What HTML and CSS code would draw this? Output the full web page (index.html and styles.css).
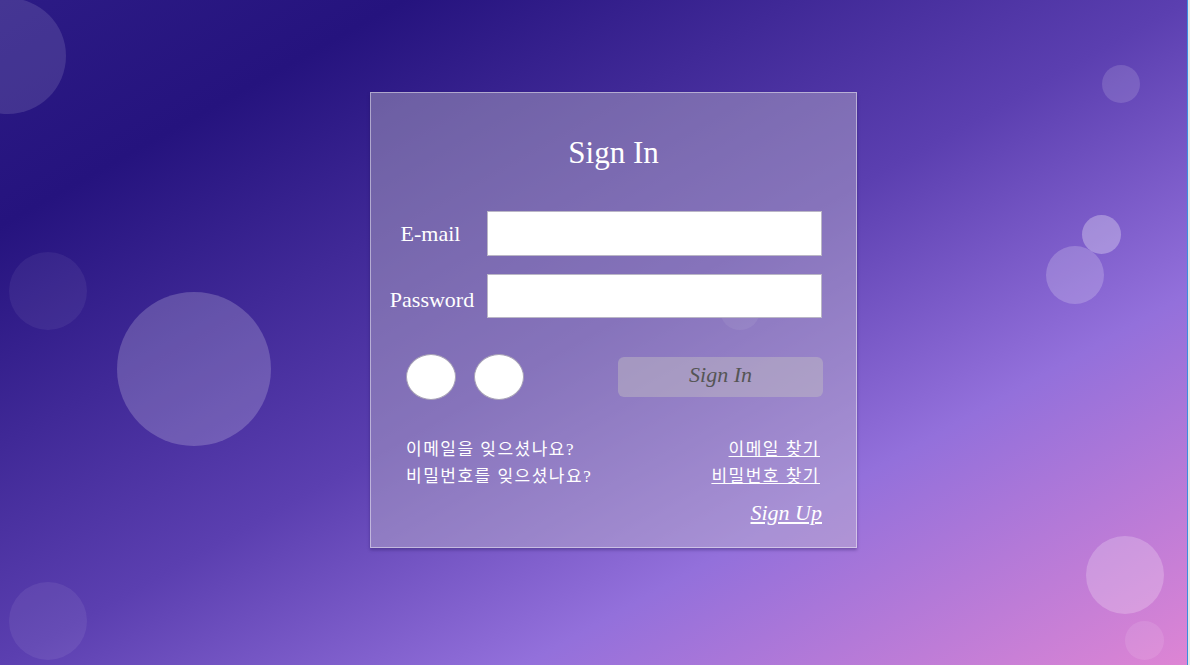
FILE: index.html
```html
<!DOCTYPE html>
<html lang="ko">
<head>
<meta charset="utf-8">
<title>Sign In</title>
<link rel="stylesheet" href="styles.css">
</head>
<body>
<div class="bg">
  <span class="bubble b1"></span>
  <span class="bubble b2"></span>
  <span class="bubble b3"></span>
  <span class="bubble b4"></span>
  <span class="bubble b5"></span>
  <span class="bubble b6"></span>
  <span class="bubble b7"></span>
  <span class="bubble b8"></span>
  <span class="bubble b9"></span>
  <span class="bubble b10"></span>
</div>
<main class="page">
  <section class="card">
    <h1 class="title">Sign In</h1>
    <form class="fields">
      <div class="field">
        <label class="label" for="email">E-mail</label>
        <input class="input input-email" id="email" type="text">
      </div>
      <div class="field">
        <label class="label label-pw" for="pw">Password</label>
        <input class="input" id="pw" type="password">
      </div>
    </form>
    <div class="actions">
      <div class="socials">
        <button class="social" type="button"></button>
        <button class="social" type="button"></button>
      </div>
      <button class="signin" type="button">Sign In</button>
    </div>
    <div class="help">
      <div class="help-row"><span>이메일을 잊으셨나요?</span><a href="#">이메일 찾기</a></div>
      <div class="help-row"><span>비밀번호를 잊으셨나요?</span><a href="#">비밀번호 찾기</a></div>
    </div>
    <div class="signup-row"><a class="signup" href="#">Sign Up</a></div>
  </section>
</main>
<div class="edge"></div>
</body>
</html>
```
FILE: styles.css
```css
html, body {
  margin: 0;
  height: 100%;
}

body {
  position: relative;
  overflow: hidden;
  background: linear-gradient(to bottom right, #2c1b85 0%, #25137e 17%, #5b3fb0 50%, #9370db 72%, #de85d4 100%);
  font-family: "Liberation Serif", "Noto Sans CJK KR", serif;
  color: #fff;
}

.bg {
  position: absolute;
  inset: 0;
  overflow: hidden;
}

.bubble {
  position: absolute;
  border-radius: 50%;
  background: rgba(255, 255, 255, 0.15);
}

.b1 { left: -50px; top: -2px; width: 116px; height: 116px; background: rgba(255,255,255,0.12); }
.b2 { left: 9px; top: 252px; width: 78px; height: 78px; background: rgba(255,255,255,0.06); }
.b3 { left: 117px; top: 292px; width: 154px; height: 154px; background: rgba(255,255,255,0.2); }
.b4 { left: 1102px; top: 65px; width: 38px; height: 38px; background: rgba(255,255,255,0.14); }
.b5 { left: 1082px; top: 215px; width: 39px; height: 39px; background: rgba(255,255,255,0.3); }
.b6 { left: 1046px; top: 246px; width: 58px; height: 58px; background: rgba(255,255,255,0.2); }
.b7 { left: 1086px; top: 536px; width: 78px; height: 78px; background: rgba(255,255,255,0.22); }
.b8 { left: 1125px; top: 621px; width: 39px; height: 39px; background: rgba(255,255,255,0.1); }
.b9 { left: 9px; top: 582px; width: 78px; height: 78px; background: rgba(255,255,255,0.07); }
.b10 { left: 720px; top: 290px; width: 40px; height: 40px; background: rgba(255,255,255,0.08); }

.page {
  position: relative;
  padding: 92px 0 0 370px;
}

.card {
  position: relative;
  width: 487px;
  box-sizing: border-box;
  border: 1px solid rgba(255, 255, 255, 0.45);
  background: rgba(200, 195, 205, 0.4);
  box-shadow: 0 2px 3px rgba(30, 15, 80, 0.35);
  padding: 40px 34px 22px 3px;
}

.title {
  margin: 0 -34px 0 -3px;
  font-size: 31px;
  font-weight: normal;
  line-height: 40px;
  text-align: center;
}

.fields {
  display: flex;
  flex-direction: column;
  gap: 18px;
  margin: 38px 0 0;
}

.field {
  display: flex;
  align-items: center;
}

.label {
  width: 113px;
  box-sizing: border-box;
  text-align: center;
  font-size: 22px;
  line-height: 25px;
}

.label-pw {
  padding-top: 7px;
  padding-left: 3px;
}

.input {
  width: 335px;
  height: 44px;
  box-sizing: border-box;
  margin: 0;
  padding: 0 8px;
  border: 1px solid #bab6c6;
  background: #fff;
  font-size: 16px;
}

.input-email {
  height: 45px;
}

.actions {
  display: flex;
  align-items: center;
  justify-content: space-between;
  margin-top: 36px;
  padding-left: 32px;
  margin-right: -1px;
}

.socials {
  display: flex;
  gap: 18px;
}

.social {
  width: 50px;
  height: 46px;
  padding: 0;
  border: 1px solid #a7a1b6;
  border-radius: 50%;
  background: #fff;
}

.signin {
  width: 205px;
  height: 40px;
  padding: 0 0 4px;
  border: none;
  border-radius: 6px;
  background: rgba(195, 190, 195, 0.45);
  color: #555;
  font-family: "Liberation Serif", serif;
  font-style: italic;
  font-size: 22px;
}

.help {
  margin-top: 36px;
  padding: 0 2px 0 32px;
  font-size: 17px;
  line-height: 27px;
  letter-spacing: 1.5px;
}

.help-row {
  display: flex;
  justify-content: space-between;
}

.help a {
  color: #fff;
  text-decoration: underline;
}

.signup-row {
  display: flex;
  justify-content: flex-end;
  margin-top: 10px;
}

.signup {
  color: #fff;
  font-style: italic;
  font-size: 22px;
  line-height: 25px;
  text-decoration: underline;
}

.edge {
  position: absolute;
  top: 0;
  right: 0;
  bottom: 0;
  width: 2px;
  border-left: 1px solid #3a8de0;
  background: #e6e6e6;
}
```
